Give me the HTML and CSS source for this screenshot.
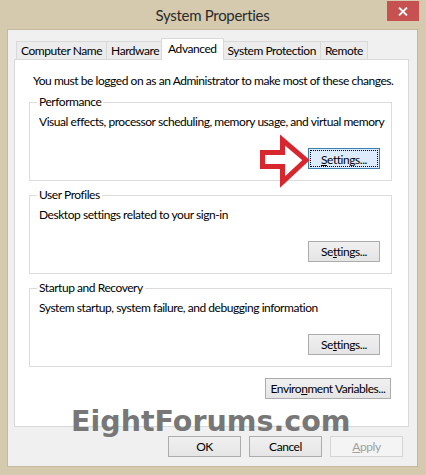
FILE: index.html
```html
<!DOCTYPE html>
<html lang="en">
<head>
  <meta charset="UTF-8">
  <title>System Properties</title>
  <link rel="stylesheet" href="styles.css">
</head>
<body>
  <div class="window">
    <header class="titlebar">
      <span></span>
      <h1 class="title">System Properties</h1>
      <button class="close" type="button" aria-label="Close">
        <svg width="10" height="9" viewBox="0 0 10 9"><path d="M1 0.5 L9 8.5 M9 0.5 L1 8.5" stroke="#fff" stroke-width="1.8" fill="none"/></svg>
      </button>
    </header>

    <main class="client">
      <nav class="tabs">
        <span class="tab">Computer Name</span>
        <span class="tab">Hardware</span>
        <span class="tab active">Advanced</span>
        <span class="tab">System Protection</span>
        <span class="tab">Remote</span>
      </nav>

      <section class="panel">
        <p class="note">You must be logged on as an Administrator to make most of these changes.</p>

        <fieldset class="group">
          <legend>Performance</legend>
          <p class="desc">Visual effects, processor scheduling, memory usage, and virtual memory</p>
          <div class="actions">
            <button class="btn focused" type="button"><span><u>S</u>ettings...</span></button>
          </div>
        </fieldset>

        <fieldset class="group">
          <legend>User Profiles</legend>
          <p class="desc">Desktop settings related to your sign-in</p>
          <div class="actions">
            <button class="btn" type="button">Se<u>t</u>tings...</button>
          </div>
        </fieldset>

        <fieldset class="group">
          <legend>Startup and Recovery</legend>
          <p class="desc">System startup, system failure, and debugging information</p>
          <div class="actions">
            <button class="btn" type="button">Se<u>t</u>tings...</button>
          </div>
        </fieldset>

        <div class="actions env">
          <button class="btn wide" type="button">Enviro<u>n</u>ment Variables...</button>
        </div>
      </section>

      <footer class="dialog-buttons">
        <button class="btn" type="button">OK</button>
        <button class="btn" type="button">Cancel</button>
        <button class="btn" type="button" disabled><u>A</u>pply</button>
      </footer>
    </main>

    <!-- callout arrow pointing at the performance settings button -->
    <svg class="arrow" width="56" height="56" viewBox="0 0 56 56">
      <polygon points="7.5,20.5 27.5,20.5 27.5,8 51,28 27.5,50 27.5,34.5 7.5,34.5" fill="#fff" stroke="#d7262d" stroke-width="5" stroke-linejoin="miter"/>
    </svg>

    <div class="watermark">EightForums.com</div>
  </div>
</body>
</html>
```

FILE: styles.css
```css
:root {
  --frame: #d5c9ae;
  --client: #f0f0f0;
  --line: #dcdcdc;
  --btn-border: #acacac;
  font-family: 'Lato', 'Liberation Sans', sans-serif;
  color: #000;
}

* {
  box-sizing: border-box;
}

body {
  margin: 0;
}

.window {
  position: relative;
  width: 426px;
  height: 475px;
  background: var(--frame);
  padding: 0 8px 8px 7px;
  display: flex;
  flex-direction: column;
}

.titlebar {
  height: 29px;
  display: grid;
  grid-template-columns: 1fr auto 1fr;
  align-items: start;
}

.title {
  margin: 0;
  font-size: 15px;
  font-weight: 400;
  letter-spacing: -0.3px;
  line-height: 30px;
  color: #2b2b2b;
}

.close {
  justify-self: end;
  margin: 1px -1px 0 0;
  width: 32px;
  height: 20px;
  border: none;
  padding: 0;
  background: #c75050;
  display: flex;
  align-items: center;
  justify-content: center;
}

.client {
  flex: 1;
  background: var(--client);
  border: 1px solid #c4b99e;
  padding: 8px 8px 0 6px;
  font-size: 12px;
  letter-spacing: -0.45px;
  white-space: nowrap;
}

.tabs {
  display: flex;
  align-items: flex-end;
  padding-left: 2px;
}

.tab {
  height: 18px;
  line-height: 17px;
  padding: 0 4px;
  background: #ececec;
  border: 1px solid #d9d9d9;
  border-bottom: none;
  margin-right: -1px;
}

.tab.active {
  position: relative;
  z-index: 1;
  height: 22px;
  line-height: 19px;
  margin: 0 -1px -1px -2px;
  padding: 0 6px;
  background: #fff;
}

.panel {
  background: #fff;
  border: 1px solid #d9d9d9;
  padding: 13px 16px 27px 14px;
}

.note {
  margin: 0 0 7px;
  padding-left: 4px;
  line-height: 15px;
}

.group {
  min-width: 0;
  margin: 0 0 7px;
  padding: 0 11px 11px 9px;
  border: 1px solid var(--line);
}

.group legend {
  padding: 0 2px;
  margin-left: -2px;
  line-height: 14px;
}

.desc {
  margin: 5px 0 0;
  line-height: 15px;
}

.actions {
  display: flex;
  justify-content: flex-end;
  margin-top: 19px;
}

.env {
  margin-top: 11px;
  padding-right: 1px;
}

.btn {
  width: 72px;
  height: 21px;
  padding: 0;
  font: inherit;
  letter-spacing: inherit;
  color: #000;
  background: linear-gradient(#f0f0f0, #e5e5e5);
  border: 1px solid var(--btn-border);
}

.btn.wide {
  width: 126px;
}

.btn.focused {
  background: #dcecfc;
  border-color: #3c7fb1;
  padding: 1px;
}

.btn.focused span {
  display: block;
  height: 100%;
  line-height: 17px;
  border: 1px dotted #000;
}

.btn:disabled {
  color: #a0a0a0;
  background: #f4f4f4;
  border-color: #d5d5d5;
}

.dialog-buttons {
  display: flex;
  justify-content: flex-end;
  gap: 8px;
  margin: 9px 6px 0 0;
}

.dialog-buttons .btn {
  width: 73px;
}

.arrow {
  position: absolute;
  left: 255px;
  top: 132px;
}

.watermark {
  position: absolute;
  left: 71px;
  top: 405px;
  font-family: 'DejaVu Sans', sans-serif;
  font-weight: 700;
  font-size: 28.5px;
  line-height: 34px;
  color: #777;
}
```
